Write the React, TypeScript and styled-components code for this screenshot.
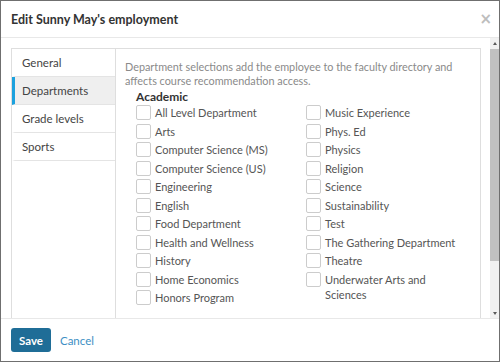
import React, { useState } from 'react'
import styled, { createGlobalStyle } from 'styled-components'

const GlobalStyle = createGlobalStyle`
  html, body {
    margin: 0;
    padding: 0;
    background: #ffffff;
    font-family: Lato, "Open Sans", sans-serif;
  }
`

// Styled components
const Modal = styled.div`
  width: 500px;
  height: 362px;
  box-sizing: border-box;
  border: 1px solid #6f6f6f;
  background: #ffffff;
  display: flex;
  flex-direction: column;
`

const Header = styled.div`
  height: 35px;
  flex: none;
  display: flex;
  align-items: center;
  justify-content: space-between;
  padding: 1px 7px 0 10px;
  border-bottom: 1px solid #e8e8e8;
`

const Title = styled.h1`
  margin: 0;
  font-size: 12.5px;
  font-weight: 700;
  color: #333333;
`

const CloseButton = styled.button`
  border: none;
  background: none;
  padding: 0;
  font-family: "DejaVu Sans", sans-serif;
  font-size: 15px;
  font-weight: 700;
  line-height: 1;
  color: #bdbdbd;
  cursor: pointer;
`

const Body = styled.div`
  flex: 1;
  min-height: 0;
  display: flex;
`

const ScrollArea = styled.div`
  flex: 1;
  min-width: 0;
  overflow: hidden;
  padding: 10px 9px 10px 10px;
`

const Scrollbar = styled.div`
  flex: none;
  width: 9px;
  display: flex;
  flex-direction: column;
  background: #f1f1f1;
`

const ScrollArrow = styled.div<{ $down?: boolean }>`
  height: 10px;
  flex: none;
  display: flex;
  align-items: center;
  justify-content: center;

  &::before {
    content: '';
    border-left: 2.5px solid transparent;
    border-right: 2.5px solid transparent;
    ${(p) => (p.$down ? 'border-top: 3px solid #5a5a5a;' : 'border-bottom: 3px solid #5a5a5a;')}
  }
`

const ScrollTrack = styled.div`
  flex: 1;
  display: flex;
  flex-direction: column;
`

const ScrollThumb = styled.div`
  height: 212px;
  margin-top: 1px;
  background: #c1c1c1;
`

const Panel = styled.div`
  display: grid;
  grid-template-columns: 104px 1fr;
  min-height: 320px;
  border: 1px solid #dedede;
`

const TabList = styled.div`
  display: flex;
  flex-direction: column;
  border-right: 1px solid #dedede;
`

const Tab = styled.div<{ $active?: boolean }>`
  height: 27px;
  display: flex;
  align-items: center;
  padding-left: 7px;
  font-size: 11.5px;
  color: #444444;
  border-bottom: 1px solid #e4e4e4;
  border-left: 3px solid ${(p) => (p.$active ? '#1ba1de' : 'transparent')};
  background: ${(p) => (p.$active ? '#efefef' : '#ffffff')};
  cursor: pointer;
`

const Content = styled.div`
  padding: 11px 9px 0 9px;
`

const Description = styled.p`
  margin: 0;
  font-size: 10.85px;
  line-height: 14px;
  color: #8a8a8a;
`

const GroupTitle = styled.h2`
  margin: 1px 0 1px 11px;
  font-size: 12px;
  line-height: 15px;
  font-weight: 700;
  color: #333333;
`

const Columns = styled.div`
  display: grid;
  grid-template-columns: 170px 162px;
  margin-left: 11px;
`

const Column = styled.div`
  display: flex;
  flex-direction: column;
  gap: 3.5px;
`

const Option = styled.label`
  display: flex;
  align-items: flex-start;
  gap: 4px;
  cursor: pointer;
`

const Box = styled.span<{ $checked?: boolean }>`
  flex: none;
  width: 15px;
  height: 15px;
  box-sizing: border-box;
  border: 1px solid #cccccc;
  border-radius: 2px;
  background: ${(p) => (p.$checked ? '#1f6d97' : '#ffffff')};
`

const OptionText = styled.span`
  font-size: 11px;
  line-height: 15px;
  color: #555555;
`

const Footer = styled.div`
  height: 43px;
  flex: none;
  box-sizing: border-box;
  border-top: 1px solid #e8e8e8;
  display: flex;
  align-items: center;
  gap: 9px;
  padding: 0 10px;
`

const SaveButton = styled.button`
  height: 24px;
  padding: 0 8px;
  border: none;
  border-radius: 3px;
  background: #1f6d97;
  color: #ffffff;
  font-family: Lato, sans-serif;
  font-size: 11.5px;
  font-weight: 700;
  cursor: pointer;
`

const CancelLink = styled.a`
  font-size: 11.5px;
  color: #3d8fc4;
  text-decoration: none;
  cursor: pointer;
`

const tabs = ['General', 'Departments', 'Grade levels', 'Sports']

const leftDepartments = [
  'All Level Department',
  'Arts',
  'Computer Science (MS)',
  'Computer Science (US)',
  'Engineering',
  'English',
  'Food Department',
  'Health and Wellness',
  'History',
  'Home Economics',
  'Honors Program',
]

const rightDepartments = [
  'Music Experience',
  'Phys. Ed',
  'Physics',
  'Religion',
  'Science',
  'Sustainability',
  'Test',
  'The Gathering Department',
  'Theatre',
  'Underwater Arts and Sciences',
]

const App: React.FC = () => {
  const [activeTab, setActiveTab] = useState('Departments')
  const [checked, setChecked] = useState<string[]>([])

  const toggle = (name: string) =>
    setChecked((prev) => (prev.includes(name) ? prev.filter((n) => n !== name) : [...prev, name]))

  const renderColumn = (items: string[]) => (
    <Column>
      {items.map((name) => (
        <Option key={name} onClick={() => toggle(name)}>
          <Box $checked={checked.includes(name)} />
          <OptionText>{name}</OptionText>
        </Option>
      ))}
    </Column>
  )

  return (
    <>
      <GlobalStyle />
      <Modal>
        <Header>
          <Title>Edit Sunny May's employment</Title>
          <CloseButton aria-label="Close">×</CloseButton>
        </Header>
        <Body>
          <ScrollArea>
            <Panel>
              <TabList>
                {tabs.map((t) => (
                  <Tab key={t} $active={t === activeTab} onClick={() => setActiveTab(t)}>
                    {t}
                  </Tab>
                ))}
              </TabList>
              <Content>
                <Description>
                  Department selections add the employee to the faculty directory and affects course
                  recommendation access.
                </Description>
                <GroupTitle>Academic</GroupTitle>
                <Columns>
                  {renderColumn(leftDepartments)}
                  {renderColumn(rightDepartments)}
                </Columns>
              </Content>
            </Panel>
          </ScrollArea>
          <Scrollbar>
            <ScrollArrow />
            <ScrollTrack>
              <ScrollThumb />
            </ScrollTrack>
            <ScrollArrow $down />
          </Scrollbar>
        </Body>
        <Footer>
          <SaveButton>Save</SaveButton>
          <CancelLink>Cancel</CancelLink>
        </Footer>
      </Modal>
    </>
  )
}

export default App
